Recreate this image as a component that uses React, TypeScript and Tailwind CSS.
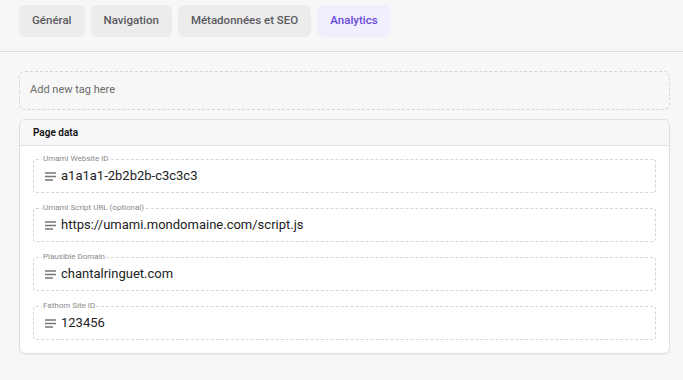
import React from 'react';

const tabs = ['Général', 'Navigation', 'Métadonnées et SEO', 'Analytics'];

const fields = [
  { label: 'Umami Website ID', value: 'a1a1a1-2b2b2b-c3c3c3' },
  { label: 'Umami Script URL (optional)', value: 'https://umami.mondomaine.com/script.js' },
  { label: 'Plausible Domain', value: 'chantalringuet.com' },
  { label: 'Fathom Site ID', value: '123456' },
];

const TextIcon: React.FC = () => (
  <svg width="11" height="9" viewBox="0 0 11 9" className="shrink-0 text-[#777]">
    <path d="M0 1h11M0 4.5h11M0 8h8" stroke="currentColor" strokeWidth="1.3" />
  </svg>
);

const App: React.FC = () => {
  const active = 'Analytics';

  return (
    <div className="min-h-screen bg-[#f7f7f7] font-['Roboto',sans-serif] text-[#222]">
      {/* Onglets */}
      <div className="flex gap-[6px] border-b border-[#dcdcdc] px-[19px] pt-[5px] pb-[14px]">
        {tabs.map(tab => (
          <div
            key={tab}
            className={
              tab === active
                ? 'flex h-8 items-center rounded-md bg-[#f1eefe] px-[13px] text-[11.5px] font-medium text-[#6a48d9]'
                : 'flex h-8 items-center rounded-md bg-[#ececed] px-[13px] text-[11.5px] font-medium text-[#5a5a5e]'
            }
          >
            {tab}
          </div>
        ))}
      </div>

      <div className="flex flex-col gap-[9px] pl-[19px] pr-[13px] pt-[19px]">
        {/* Champ des tags */}
        <div className="flex h-[39px] items-center rounded-md border border-dashed border-[#d6d6d6] px-[10px] text-[11px] text-[#6b6b6b]">
          Add new tag here
        </div>

        {/* Carte des données */}
        <div className="overflow-hidden rounded-md border border-[#dedede] bg-white shadow-[0_1px_1px_rgba(0,0,0,0.06)]">
          <div className="flex h-[26px] items-center border-b border-[#e2e2e2] bg-[#f7f7f7] px-[13px] text-[10px] font-semibold text-[#111]">
            Page data
          </div>
          <div className="flex flex-col gap-[10px] px-[13px] pt-[8px] pb-[13px]">
            {fields.map(f => (
              <fieldset
                key={f.label}
                className="rounded-[3px] border border-dashed border-[#d6d6d6] pl-[8px] pr-2 pt-[2px] pb-[6px]"
              >
                <legend className="px-[1px] text-[8px] leading-[10px] text-[#8a8a8a]">{f.label}</legend>
                <div className="ml-[3px] flex items-center gap-[5px] text-[13px] leading-[20px] text-[#222]">
                  <TextIcon />
                  <span>{f.value}</span>
                </div>
              </fieldset>
            ))}
          </div>
        </div>
      </div>
    </div>
  );
};

export default App;
